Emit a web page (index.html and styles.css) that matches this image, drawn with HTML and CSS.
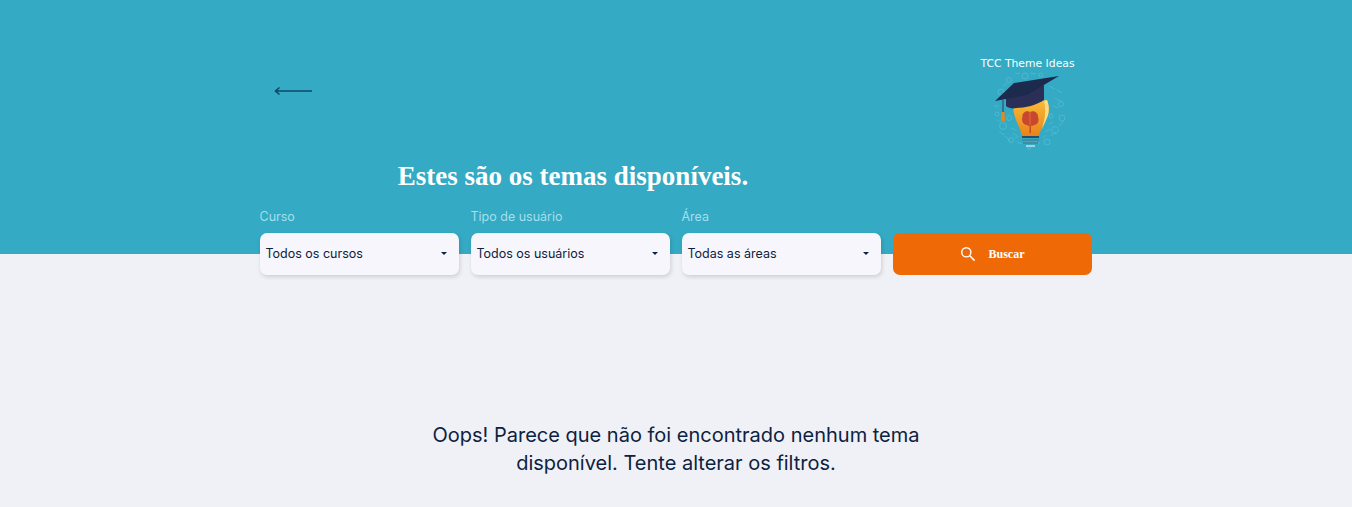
FILE: index.html
```html
<!DOCTYPE html>
<html lang="pt-BR">
<head>
    <meta charset="UTF-8">
    <meta name="viewport" content="width=device-width, initial-scale=1.0">
    <title>TCC Theme Ideas</title>
    <link rel="stylesheet" href="styles.css">
</head>
<body>
    <header class="hero">
        <div class="wrap">
            <div class="top-row">
                <a class="back" href="#" aria-label="Voltar">
                    <svg width="40" height="12" viewBox="0 0 40 12">
                        <path d="M2.5 6H39M6.5 2.5L2.5 6L6.5 9.5" fill="none" stroke="#0b4a68" stroke-width="1.6"/>
                    </svg>
                </a>
                <div class="brand">
                    <span class="brand-name">TCC Theme Ideas</span>
                    <svg class="brand-logo" width="80" height="80" viewBox="0 0 80 80">
                        <defs>
                            <linearGradient id="bulb" x1="0" y1="0" x2="0" y2="1">
                                <stop offset="0" stop-color="#f8bd38"/>
                                <stop offset="1" stop-color="#e9821a"/>
                            </linearGradient>
                        </defs>
                        <g fill="none" stroke="#6cc6d9" stroke-width="0.8" opacity="0.6">
                            <circle cx="12" cy="22" r="3"/>
                            <circle cx="8" cy="44" r="2"/>
                            <circle cx="14" cy="56" r="3.5"/>
                            <circle cx="22" cy="70" r="2.5"/>
                            <circle cx="40" cy="78" r="1.500"/>
                            <circle cx="58" cy="72" r="3"/>
                            <circle cx="66" cy="60" r="3.5"/>
                            <circle cx="73" cy="48" r="3"/>
                            <circle cx="72" cy="34" r="2.5"/>
                            <circle cx="62" cy="46" r="2"/>
                            <circle cx="20" cy="48" r="2.5"/>
                            <circle cx="36" cy="6" r="3"/>
                            <circle cx="20" cy="10" r="2.5"/>
                            <circle cx="52" cy="5" r="2"/>
                            <path d="M10 30l5-3M5 36h5M8 50l4 2M10 62l6 3M16 66l5 5M28 72l5 2M46 71l5 3M62 66l5-4M70 56l4-4M64 36l6 2M66 28l7 4M68 20l5 3M60 16l6 3M26 4l5-1M42 3l5 1M14 16l4-3"/>
                            <path d="M22 58l5 2M24 63l4 3M56 62l5-3M60 54l4-2M26 68l4-2M54 68l3-3"/>
                        </g>
                        <path d="M24 34C24 40 25 45 27 50C29 55 32 60 33 66H50C51 60 54 56 57 50C60 44 61 38 58 30Z" fill="url(#bulb)"/>
                        <path d="M52 62C53 58 55 55 57 50C60 44 61 38 58 30L55 31C58 42 55 52 52 62Z" fill="#f9dd8a"/>
                        <path d="M41 42C37 40 33 43 33.500 47C32 50 34 55 38 55C39 56 40 56 40.500 55.500V63H42V55.500C43 56 44 56 45 55C49 55 50.500 50 49 47C49.500 43 45 40 41 42Z" fill="#c9472e"/>
                        <path d="M41 42V55" stroke="#e8913a" stroke-width="0.6" fill="none"/>
                        <path d="M33 66H50V68H33Z" fill="#24506f"/>
                        <path d="M33 69H50V71H33ZM34 72H49V74H34Z" fill="#3f8ea8"/>
                        <path d="M37 75H46V77H37Z" fill="#9ad6e3"/>
                        <path d="M17 27L55 15V30C48 35 36 38 27 38C24 39 19 38 17 36Z" fill="#2b2f57"/>
                        <path d="M6 31L25 13L70 6L38 25Z" fill="#1c2a4e"/>
                        <path d="M14 30V43" stroke="#1c2a4e" stroke-width="0.8"/>
                        <path d="M12.500 42H15.500L16 51H12Z" fill="#e08a22"/>
                    </svg>
                </div>
            </div>
            <h1 class="title">Estes são os temas disponíveis.</h1>
            <form class="filters">
                <div class="field">
                    <label class="field-label">Curso</label>
                    <div class="select"><span>Todos os cursos</span><i class="caret"></i></div>
                </div>
                <div class="field">
                    <label class="field-label">Tipo de usuário</label>
                    <div class="select"><span>Todos os usuários</span><i class="caret"></i></div>
                </div>
                <div class="field">
                    <label class="field-label">Área</label>
                    <div class="select"><span>Todas as áreas</span><i class="caret"></i></div>
                </div>
                <button class="search" type="button">
                    <svg width="16" height="16" viewBox="0 0 16 16">
                        <circle cx="6.3" cy="6.3" r="4.6" fill="none" stroke="#fff" stroke-width="1.4"/>
                        <path d="M9.8 9.8L14.6 14.6" stroke="#fff" stroke-width="1.6"/>
                    </svg>
                    <span>Buscar</span>
                </button>
            </form>
        </div>
    </header>
    <main class="empty">
        <p>Oops! Parece que não foi encontrado nenhum tema disponível. Tente alterar os filtros.</p>
    </main>
</body>
</html>
```

FILE: styles.css
```css
* {
    margin: 0;
    padding: 0;
    box-sizing: border-box;
}

body {
    font-family: 'Inter', 'Liberation Sans', sans-serif;
    background-color: #f0f1f6;
    color: #0d2240;
    min-height: 100vh;
}

.hero {
    background-color: #34aac4;
    height: 254px;
}

.wrap {
    width: 833px;
    margin: 0 auto;
    padding-top: 56px;
}

.top-row {
    display: flex;
    justify-content: space-between;
    align-items: flex-start;
    height: 94px;
}

.back {
    display: block;
    margin: 29px 0 0 13px;
    line-height: 0;
}

.brand {
    display: flex;
    flex-direction: column;
    align-items: center;
    width: 96px;
    margin: 1px 17px 0 0;
}

.brand-name {
    font-family: 'DejaVu Sans', sans-serif;
    font-size: 10.8px;
    line-height: 14px;
    color: #fff;
    white-space: nowrap;
}

.brand-logo {
    margin: -1px 0 0 2px;
}

.title {
    font-family: 'Liberation Serif', serif;
    font-size: 27px;
    line-height: 32px;
    color: #fff;
    text-align: center;
    width: 627px;
    margin-top: 10px;
}

.filters {
    display: flex;
    gap: 12px;
    align-items: flex-end;
    margin-top: 16px;
}

.field {
    width: 199px;
}

.field-label {
    display: block;
    font-size: 12.5px;
    line-height: 18px;
    color: #a5dfec;
    margin-bottom: 7px;
}

.select {
    display: flex;
    align-items: center;
    justify-content: space-between;
    height: 42px;
    padding: 0 12px 1px 6px;
    background: #f6f6fc;
    border-radius: 7px;
    box-shadow: 1px 2px 4px rgba(0, 0, 0, 0.14);
    font-size: 12.5px;
    color: #0d2240;
}

.caret {
    width: 0;
    height: 0;
    border-left: 3px solid transparent;
    border-right: 3px solid transparent;
    border-top: 3px solid #0d2240;
}

.search {
    display: flex;
    align-items: center;
    justify-content: center;
    gap: 13px;
    width: 199px;
    height: 42px;
    border: none;
    border-radius: 7px;
    background-color: #ef6a07;
    color: #fff;
    font-family: 'Liberation Serif', serif;
    font-size: 12px;
    font-weight: bold;
    cursor: pointer;
}

.empty {
    display: flex;
    justify-content: center;
    padding-top: 167px;
}

.empty p {
    width: 510px;
    font-size: 20px;
    line-height: 28px;
    text-align: center;
    color: #0d2240;
}
```
